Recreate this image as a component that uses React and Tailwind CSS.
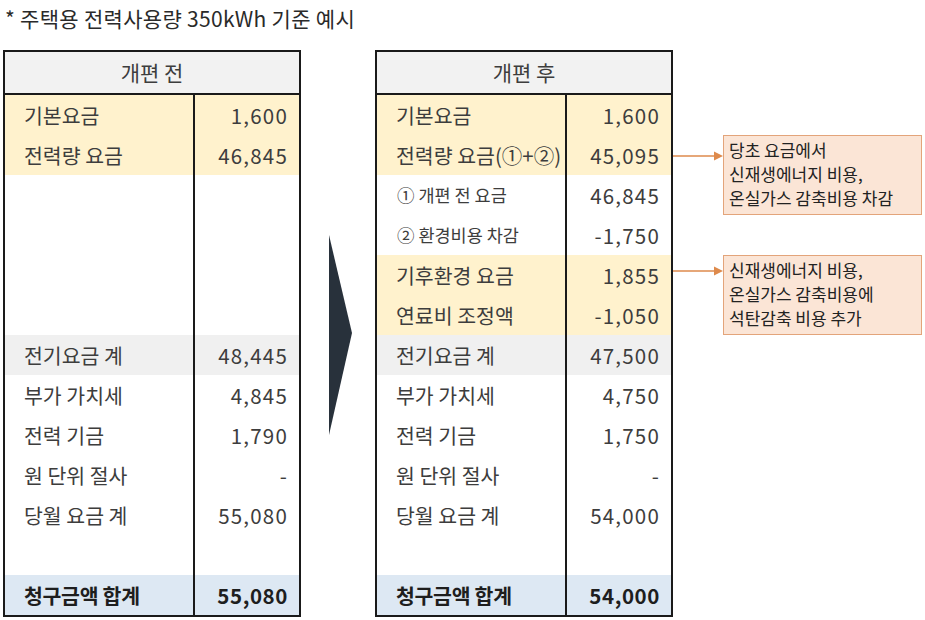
import React from "react";

const LEFT = [
  { l: "기본요금", v: "1,600", bg: "y" },
  { l: "전력량 요금", v: "46,845", bg: "y" },
  {}, {}, {}, {},
  { l: "전기요금 계", v: "48,445", bg: "g" },
  { l: "부가 가치세", v: "4,845" },
  { l: "전력 기금", v: "1,790" },
  { l: "원 단위 절사", v: "-" },
  { l: "당월 요금 계", v: "55,080" },
  {},
  { l: "청구금액 합계", v: "55,080", bg: "b", bold: true },
];

const RIGHT = [
  { l: "기본요금", v: "1,600", bg: "y" },
  { l: "전력량 요금(①+②)", v: "45,095", bg: "y" },
  { l: "① 개편 전 요금", v: "46,845", small: true },
  { l: "② 환경비용 차감", v: "-1,750", small: true },
  { l: "기후환경 요금", v: "1,855", bg: "y" },
  { l: "연료비 조정액", v: "-1,050", bg: "y" },
  { l: "전기요금 계", v: "47,500", bg: "g" },
  { l: "부가 가치세", v: "4,750" },
  { l: "전력 기금", v: "1,750" },
  { l: "원 단위 절사", v: "-" },
  { l: "당월 요금 계", v: "54,000" },
  {},
  { l: "청구금액 합계", v: "54,000", bg: "b", bold: true },
];

function bgClass(bg) {
  if (bg === "y") return "bg-[#fff2cd]";
  if (bg === "g") return "bg-[#f0f0f0]";
  if (bg === "b") return "bg-[#dde8f3]";
  return "bg-white";
}

function Row({ r }) {
  const bg = bgClass(r.bg);
  const txt = r.bold ? "font-bold text-[#1e1e1e]" : "text-[#3d3d3d]";
  const size = r.small ? "text-[17.5px]" : "text-[20.5px]";
  return (
    <div className={`flex h-[40px] ${bg}`}>
      <div
        className={`w-[190px] shrink-0 border-r-2 border-[#1a1a1a] flex items-center ${
          r.small ? "pl-[20px]" : "pl-[19px]"
        } ${size} ${txt} whitespace-nowrap ${r.bold ? "tracking-[-0.3px]" : ""}`}
      >
        {r.l || ""}
      </div>
      <div
        className={`flex-1 flex items-center justify-end pr-[11px] text-[20.5px] ${
          r.bold ? "tracking-[0.6px]" : "tracking-[1.2px]"
        } ${txt}`}
      >
        {r.v || ""}
      </div>
    </div>
  );
}

function Table({ title, rows }) {
  return (
    <div className="w-[298px] shrink-0 border-2 border-[#1a1a1a] bg-white">
      <div className="h-[43px] bg-[#f2f2f2] border-b-2 border-[#1a1a1a] flex items-center justify-center text-[21px] text-[#3d3d3d]">
        {title}
      </div>
      {rows.map((r, i) => (
        <Row key={i} r={r} />
      ))}
    </div>
  );
}

function Pointer() {
  return (
    <svg width="50" height="12" viewBox="0 0 50 12" className="shrink-0">
      <line x1="0" y1="6" x2="43" y2="6" stroke="#de8a4c" strokeWidth="1.5" />
      <polygon points="41,1.5 50,6 41,10.5" fill="#de8a4c" />
    </svg>
  );
}

function Note({ lines, arrowTop }) {
  return (
    <div className="flex items-start">
      <div style={{ marginTop: arrowTop }}>
        <Pointer />
      </div>
      <div className="w-[199px] h-[80px] border border-[#e3a47a] bg-[#fbe5d6] pl-[5px] pt-[2px] text-[17px] leading-[24px] text-[#222]">
        {lines.map((t, i) => (
          <div key={i} className="whitespace-nowrap">{t}</div>
        ))}
      </div>
    </div>
  );
}

export default function App() {
  return (
    <div className="w-[925px] h-[620px] bg-white overflow-hidden font-['Noto_Sans_CJK_KR',sans-serif]">
      <div className="pl-[5px] pt-[3px] h-[50px] text-[21px] leading-[30px] text-[#2a2a2a] tracking-[0.3px]">
        * 주택용 전력사용량 350kWh 기준 예시
      </div>
      <div className="flex pl-[3px]">
        <Table title="개편 전" rows={LEFT} />
        <div className="w-[74px] shrink-0 flex justify-start pl-[28px]">
          <svg width="23" height="200" viewBox="0 0 23 200" className="mt-[185px]">
            <polygon points="0,0 23,98 0,200" fill="#28313b" />
          </svg>
        </div>
        <Table title="개편 후" rows={RIGHT} />
        <div className="flex flex-col pt-[85px] gap-[40px]">
          <Note
            arrowTop={15}
            lines={["당초 요금에서", "신재생에너지 비용,", "온실가스 감축비용 차감"]}
          />
          <Note
            arrowTop={10}
            lines={["신재생에너지 비용,", "온실가스 감축비용에", "석탄감축 비용 추가"]}
          />
        </div>
      </div>
    </div>
  );
}
